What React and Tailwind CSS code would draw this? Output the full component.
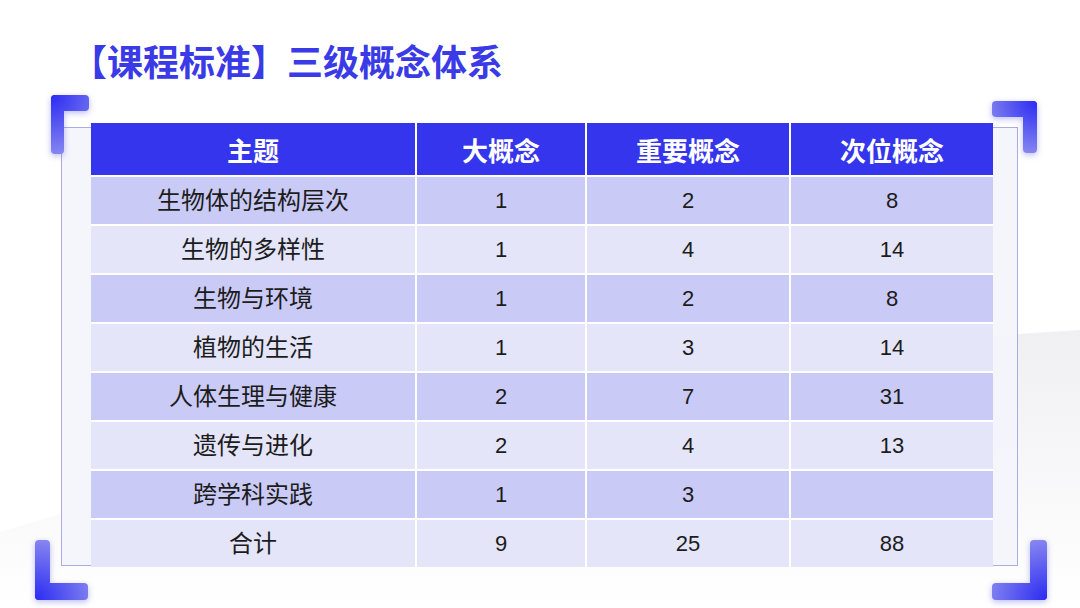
import React from 'react';

const rows = [
  ['生物体的结构层次', '1', '2', '8'],
  ['生物的多样性', '1', '4', '14'],
  ['生物与环境', '1', '2', '8'],
  ['植物的生活', '1', '3', '14'],
  ['人体生理与健康', '2', '7', '31'],
  ['遗传与进化', '2', '4', '13'],
  ['跨学科实践', '1', '3', ''],
  ['合计', '9', '25', '88'],
];

const headers = ['主题', '大概念', '重要概念', '次位概念'];

// L-shaped corner bracket; corner says which corner the bend sits in
function Bracket({ id, corner, w, h, tx, ty, className }) {
  const right = corner.includes('r');
  const bottom = corner.includes('b');
  return (
    <svg width={w} height={h} viewBox={`0 0 ${w} ${h}`} className={className}>
      <defs>
        <radialGradient id={id} gradientUnits="userSpaceOnUse" cx={right ? w : 0} cy={bottom ? h : 0} r={Math.max(w, h) * 1.1}>
          <stop offset="0" stopColor="#2a2af2" />
          <stop offset="1" stopColor="#8e8ef0" />
        </radialGradient>
      </defs>
      <rect x="0" y={bottom ? h - tx : 0} width={w} height={tx} rx="4" fill={`url(#${id})`} />
      <rect x={right ? w - ty : 0} y="0" width={ty} height={h} rx="4" fill={`url(#${id})`} />
    </svg>
  );
}

export default function App() {
  return (
    <div className="relative w-[1080px] h-[608px] overflow-hidden bg-white font-['Liberation_Sans','Noto_Sans_CJK_SC',sans-serif]">
      <svg className="absolute inset-0" width="1080" height="608" viewBox="0 0 1080 608">
        <defs>
          <linearGradient id="bgfade" x1="0" y1="0" x2="0" y2="1">
            <stop offset="0" stopColor="#ececf0" />
            <stop offset="1" stopColor="#ffffff" />
          </linearGradient>
        </defs>
        <path d="M0 532 C 200 470, 700 350, 1080 330 L 1080 608 L 0 608 Z" fill="url(#bgfade)" opacity="0.8" />
      </svg>

      <div className="relative">
        <h1 className="pt-[42px] pl-[71px] text-[36px] leading-none font-bold text-[#3a3ae6] font-['Noto_Sans_CJK_SC',sans-serif]">
          【课程标准】三级概念体系
        </h1>

        <div className="relative ml-[61px] mt-[49px] w-[957px] h-[439px] border border-[#acace2] bg-[#f4f4fc]/90">
          <div className="-mt-[5px] ml-[29px] w-[902px] grid grid-cols-[324px_168px_202px_202px] gap-[2px] bg-white">
            {headers.map(h => (
              <div key={h} className="h-[52px] flex items-center justify-center bg-[#3535ee] text-white text-[26px] font-bold font-['Noto_Sans_CJK_SC',sans-serif]">
                {h}
              </div>
            ))}
            {rows.map((r, i) => (
              r.map((c, j) => (
                <div
                  key={i + '-' + j}
                  className={`h-[47px] flex items-center justify-center text-[#1c1c1c] ${j === 0 ? 'text-[24px]' : 'text-[22px]'} ${i % 2 === 0 ? 'bg-[#cacaf6]' : 'bg-[#e4e5f9]'}`}
                >
                  {c}
                </div>
              ))
            ))}
          </div>

          <Bracket id="tl" corner="tl" w={38} h={59} tx={16} ty={13} className="absolute -left-[11px] -top-[33px] drop-shadow-[0_2px_3px_rgba(60,60,230,0.35)]" />
          <Bracket id="tr" corner="tr" w={45} h={52} tx={16} ty={14} className="absolute -right-[20px] -top-[27px] drop-shadow-[0_2px_3px_rgba(60,60,230,0.35)]" />
          <Bracket id="bl" corner="bl" w={53} h={60} tx={17} ty={15} className="absolute -left-[27px] -bottom-[35px] drop-shadow-[0_2px_3px_rgba(60,60,230,0.35)]" />
          <Bracket id="br" corner="br" w={55} h={60} tx={17} ty={17} className="absolute -right-[30px] -bottom-[35px] drop-shadow-[0_2px_3px_rgba(60,60,230,0.35)]" />
        </div>
      </div>
    </div>
  );
}
